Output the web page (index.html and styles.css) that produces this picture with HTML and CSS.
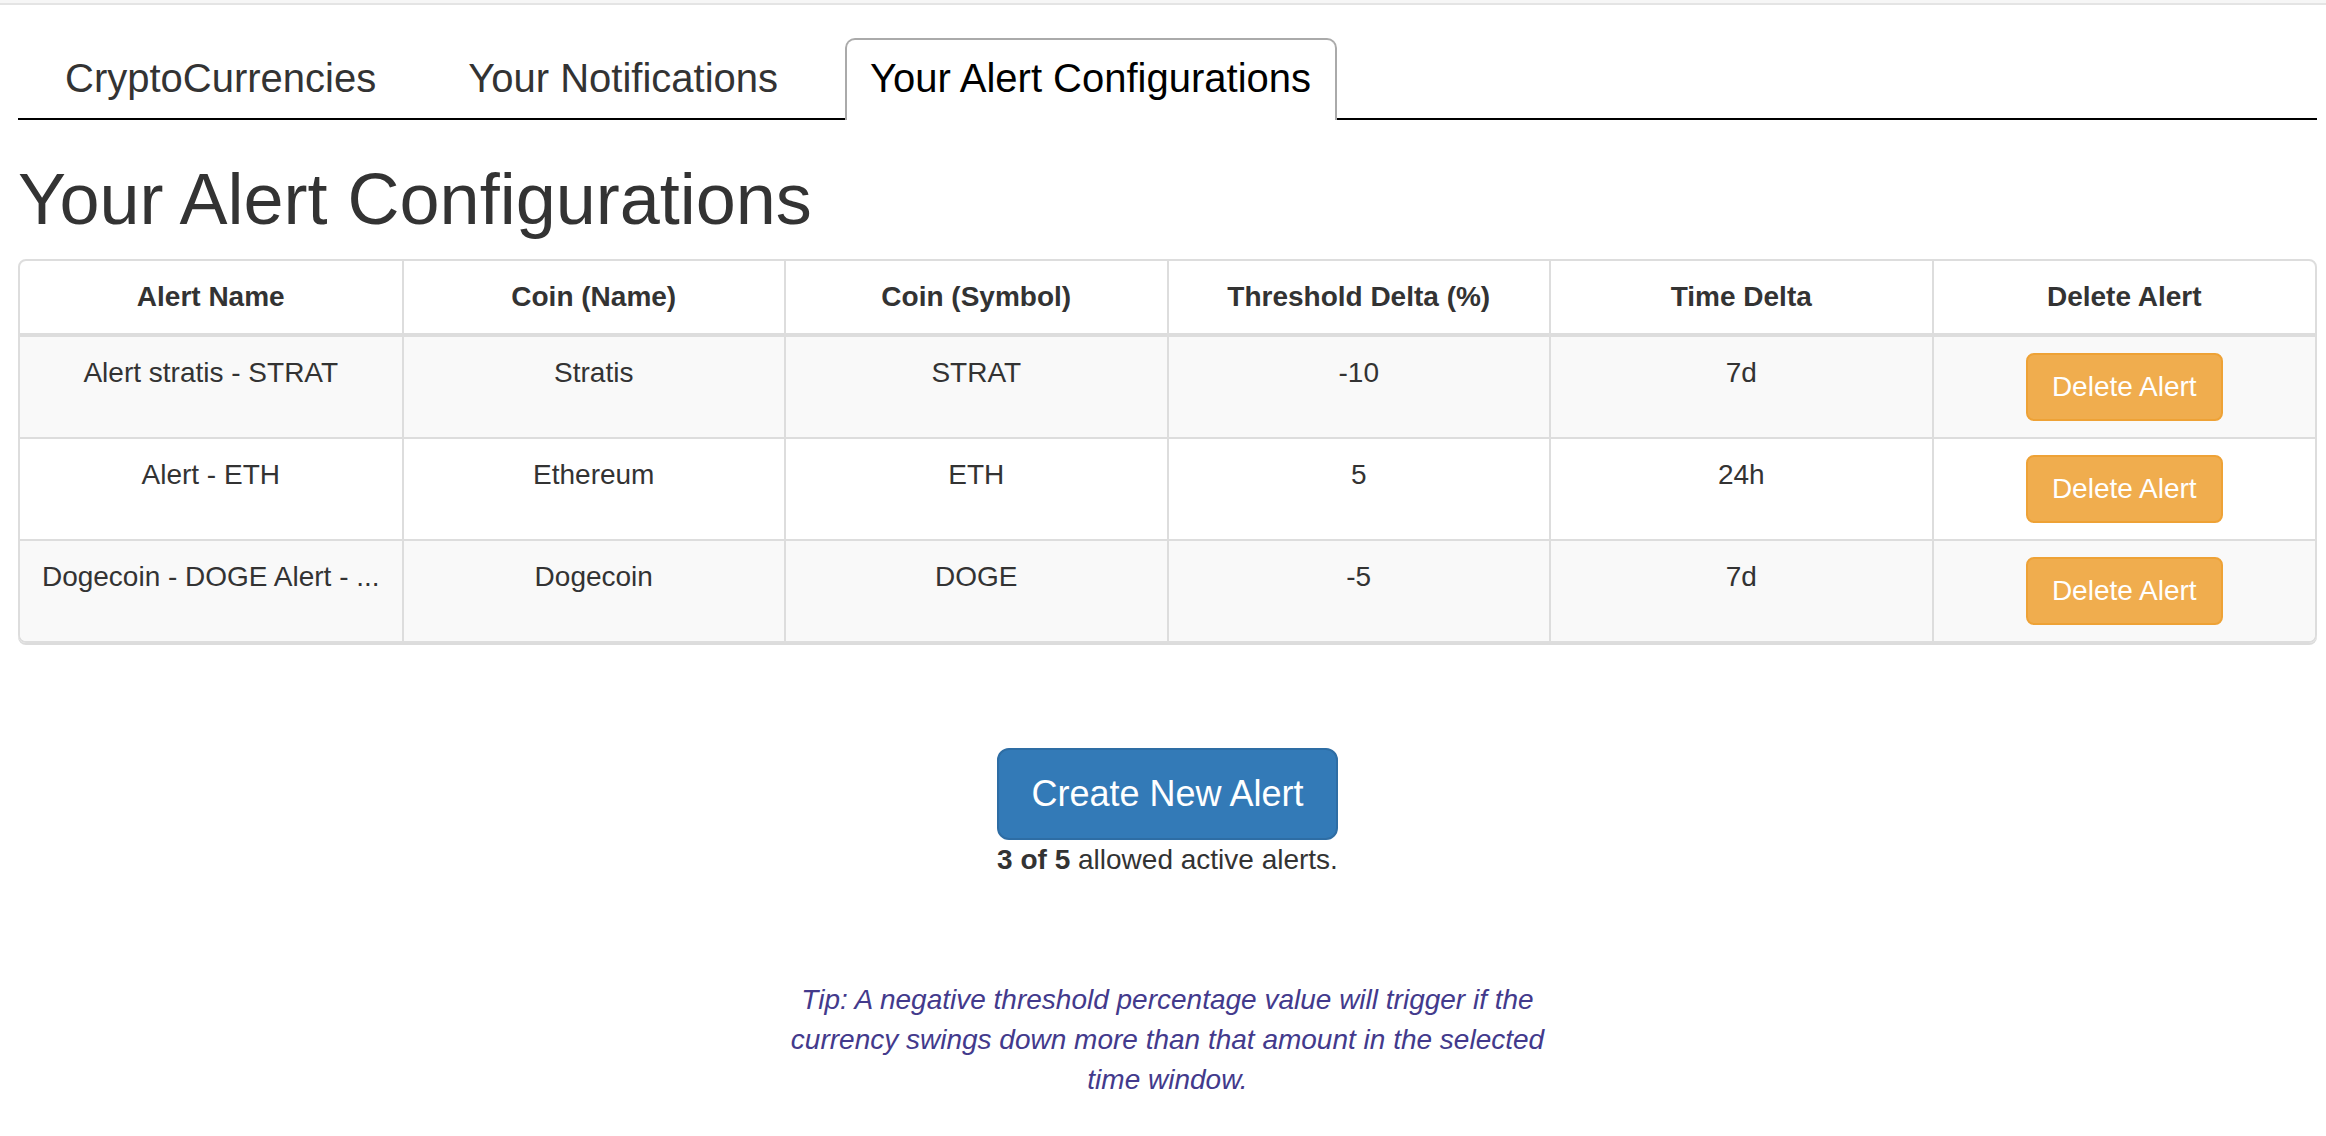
FILE: index.html
```html
<!DOCTYPE html>
<html lang="en">
<head>
<meta charset="utf-8">
<title>Your Alert Configurations</title>
<link rel="stylesheet" href="styles.css">
</head>
<body>
<div class="topbar"></div>
<div class="container">
  <ul class="tabs">
    <li class="tab">CryptoCurrencies</li>
    <li class="tab">Your Notifications</li>
    <li class="tab tab-active">Your Alert Configurations</li>
  </ul>
  <h1 class="title">Your Alert Configurations</h1>
  <div class="table-wrap">
    <table class="alerts">
      <thead>
        <tr>
          <th>Alert Name</th>
          <th>Coin (Name)</th>
          <th>Coin (Symbol)</th>
          <th>Threshold Delta (%)</th>
          <th>Time Delta</th>
          <th>Delete Alert</th>
        </tr>
      </thead>
      <tbody>
        <tr class="striped">
          <td>Alert stratis - STRAT</td>
          <td>Stratis</td>
          <td>STRAT</td>
          <td>-10</td>
          <td>7d</td>
          <td><button class="btn-delete">Delete Alert</button></td>
        </tr>
        <tr>
          <td>Alert - ETH</td>
          <td>Ethereum</td>
          <td>ETH</td>
          <td>5</td>
          <td>24h</td>
          <td><button class="btn-delete">Delete Alert</button></td>
        </tr>
        <tr class="striped">
          <td>Dogecoin - DOGE Alert - ...</td>
          <td>Dogecoin</td>
          <td>DOGE</td>
          <td>-5</td>
          <td>7d</td>
          <td><button class="btn-delete">Delete Alert</button></td>
        </tr>
      </tbody>
    </table>
  </div>
  <div class="actions">
    <button class="btn-create">Create New Alert</button>
    <p class="count"><strong>3 of 5</strong> allowed active alerts.</p>
  </div>
  <p class="tip">Tip: A negative threshold percentage value will trigger if the currency swings down more than that amount in the selected time window.</p>
</div>
</body>
</html>
```

FILE: styles.css
```css
html, body {
  margin: 0;
  padding: 0;
  background: #fff;
}

body {
  font-family: "Liberation Sans", Arial, Helvetica, sans-serif;
  font-size: 28px;
  line-height: 40px;
  color: #333;
}

.topbar {
  height: 3px;
  background: #f6f6f6;
  border-bottom: 2px solid #e4e4e4;
}

.container {
  margin-left: 18px;
  width: 2299px;
}

.tabs {
  display: flex;
  gap: 41px;
  list-style: none;
  margin: 33px 0 0;
  padding: 0 0 0 22px;
  border-bottom: 2px solid #000;
}

.tab {
  font-size: 40px;
  line-height: 57px;
  padding: 10px 24px 11px 23px;
  border: 2px solid transparent;
  border-bottom: none;
  border-radius: 10px 10px 0 0;
  margin-bottom: -2px;
  color: #333;
}

.tab-active {
  background: #fff;
  border-color: #aaa;
  color: #000;
  padding-bottom: 13px;
}

.title {
  font-size: 72px;
  font-weight: 500;
  line-height: 79px;
  margin: 40px 0 20px;
  color: #333;
}

.table-wrap {
  border: 2px solid #ddd;
  border-radius: 8px;
  overflow: hidden;
  box-shadow: 0 2px 0 #dcdcdc;
}

.alerts {
  width: 100%;
  border-collapse: collapse;
  table-layout: fixed;
}

.alerts th,
.alerts td {
  padding: 16px;
  text-align: center;
  border-left: 2px solid #ddd;
  white-space: nowrap;
  overflow: hidden;
}

.alerts th:first-child,
.alerts td:first-child {
  border-left: none;
}

.alerts th {
  font-weight: bold;
  vertical-align: bottom;
  border-bottom: 4px solid #ddd;
}

.alerts td {
  vertical-align: top;
  border-top: 2px solid #ddd;
}

.alerts thead + tbody tr:first-child td {
  border-top: none;
}

.striped td {
  background: #f9f9f9;
}

.btn-delete {
  font-family: inherit;
  font-size: 28px;
  line-height: 40px;
  padding: 12px 24px;
  color: #fff;
  background: #f0ad4e;
  border: 2px solid #eea236;
  border-radius: 8px;
  cursor: pointer;
}

.actions {
  margin-top: 105px;
  text-align: center;
}

.btn-create {
  font-family: inherit;
  font-size: 36px;
  line-height: 48px;
  padding: 20px 32px;
  color: #fff;
  background: #337ab7;
  border: 2px solid #2e6da4;
  border-radius: 12px;
  cursor: pointer;
}

.count {
  margin: 0;
}

.tip {
  max-width: 770px;
  margin: 100px auto 0;
  text-align: center;
  font-style: italic;
  color: #433a8c;
}
```
